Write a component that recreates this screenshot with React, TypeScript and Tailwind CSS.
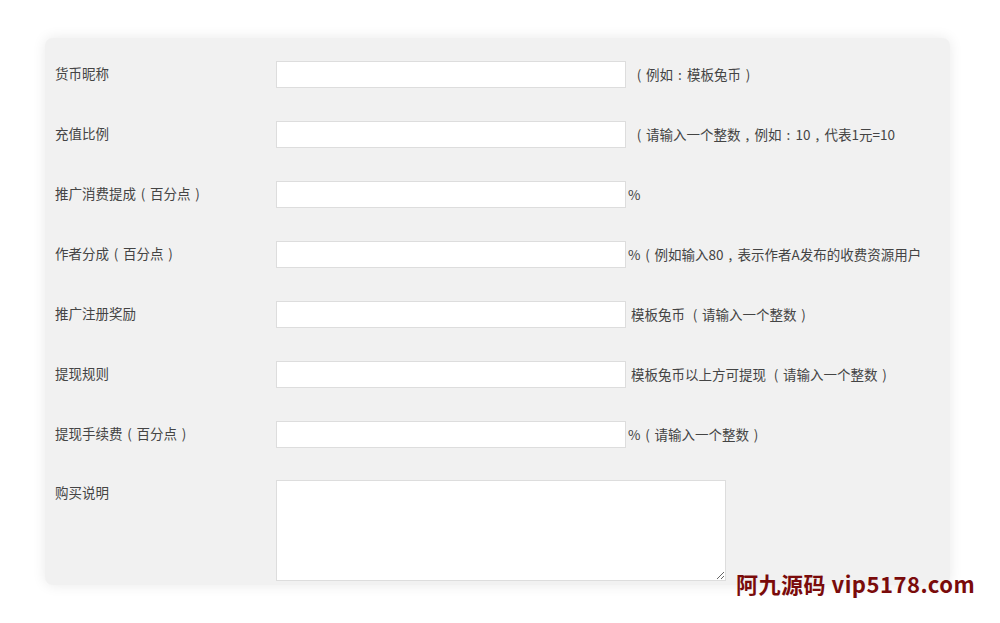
import React from 'react'

const font = { fontFamily: '"Microsoft YaHei", "Noto Sans CJK SC", "Noto Sans", sans-serif' }

const FULL: Record<string, string> = { '（': '(', '）': ')', '：': ':', '，': ',' }

// render full-width punctuation centred in a full em cell, the way YaHei draws it
function Cjk({ text }: { text: string }) {
  return (
    <>
      {Array.from(text).map((ch, i) =>
        FULL[ch] ? (
          <span key={i} className="inline-block w-[14px] text-center">
            {FULL[ch]}
          </span>
        ) : (
          <React.Fragment key={i}>{ch}</React.Fragment>
        )
      )}
    </>
  )
}

const rows: { label: string; hint: string; hintClass: string }[] = [
  { label: '货币昵称', hint: '（例如：模板兔币）', hintClass: 'pl-[6px]' },
  { label: '充值比例', hint: '（请输入一个整数，例如：10，代表1元=10', hintClass: 'pl-[6px]' },
  { label: '推广消费提成（百分点）', hint: '%', hintClass: 'pl-[2px]' },
  { label: '作者分成（百分点）', hint: '%（例如输入80，表示作者A发布的收费资源用户', hintClass: 'pl-[2px]' },
  { label: '推广注册奖励', hint: '模板兔币 （请输入一个整数）', hintClass: 'pl-[5px]' },
  { label: '提现规则', hint: '模板兔币以上方可提现 （请输入一个整数）', hintClass: 'pl-[5px]' },
  { label: '提现手续费（百分点）', hint: '%（请输入一个整数）', hintClass: 'pl-[2px]' },
]

export default function App() {
  return (
    <div className="relative w-[1000px] h-[623px] bg-white overflow-hidden" style={font}>
      <div className="ml-[45px] mt-[38px] w-[905px] h-[547px] bg-[#f1f1f1] rounded-[8px] shadow-[0_0_14px_rgba(0,0,0,0.09)] pl-[10px] pr-[14px] pt-[23px] text-[13.5px] text-[#444] overflow-hidden">
        <div className="flex flex-col gap-[33px]">
          {rows.map((r) => (
            <div key={r.label} className="flex items-center h-[27px]">
              <div className="w-[221px] shrink-0 leading-[27px] -mt-[2px] whitespace-nowrap">
                <Cjk text={r.label} />
              </div>
              <input
                type="text"
                className="w-[350px] h-[27px] shrink-0 bg-white border border-[#dddddd] outline-none"
              />
              <div className={`whitespace-nowrap ${r.hintClass}`}>
                <Cjk text={r.hint} />
              </div>
            </div>
          ))}
          <div className="flex items-start -mt-[1px]">
            <div className="w-[221px] shrink-0 leading-[27px] -mt-[1px]">购买说明</div>
            <textarea className="w-[450px] h-[101px] shrink-0 bg-white border border-[#dddddd] outline-none resize" />
          </div>
        </div>
      </div>
      <div className="absolute left-[736px] top-[569px] text-[22px] font-bold text-[#7a0b0b] whitespace-nowrap leading-[28px] tracking-[0.5px]">
        阿九源码 vip5178.com
      </div>
    </div>
  )
}
